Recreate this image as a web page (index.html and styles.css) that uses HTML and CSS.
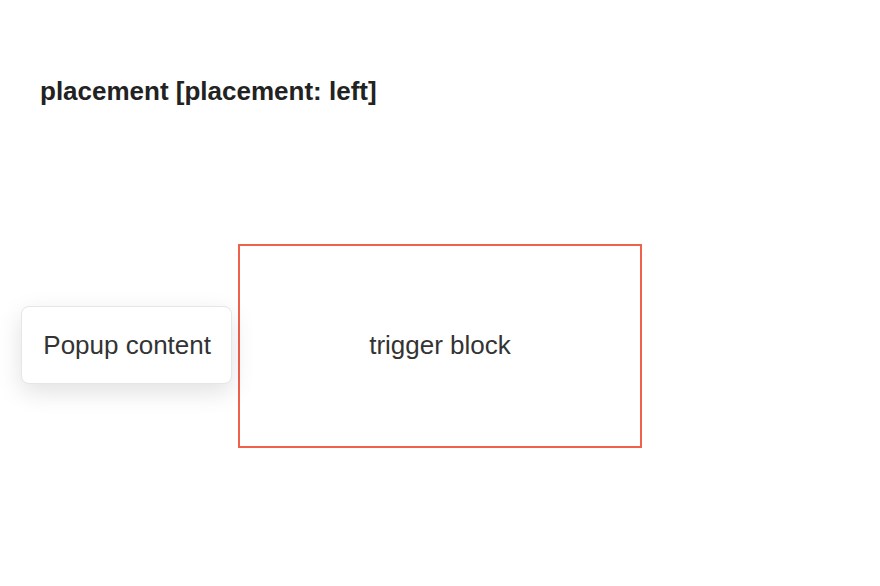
FILE: index.html
```html
<!DOCTYPE html>
<html>
<head>
<meta charset="utf-8">
<link rel="stylesheet" href="styles.css">
</head>
<body>
<div class="page">
  <h2 class="title">placement [placement: left]</h2>
  <div class="stage">
    <div class="trigger">
      <span class="label">trigger block</span>
      <div class="popup">Popup content</div>
    </div>
  </div>
</div>
</body>
</html>
```
FILE: styles.css
```css
html, body {
  margin: 0;
  padding: 0;
  background: #ffffff;
}
body {
  font-family: "Liberation Sans", Arial, sans-serif;
  color: #333333;
}
.page {
  width: 880px;
  height: 586px;
  box-sizing: border-box;
  padding-top: 76px;
}
.title {
  margin: 0 0 0 40px;
  font-size: 26px;
  line-height: 30px;
  font-weight: bold;
  color: #222222;
}
.stage {
  margin-top: 138px;
  display: flex;
  justify-content: center;
}
.trigger {
  position: relative;
  width: 400px;
  height: 200px;
  border: 2px solid #f0614d;
  display: flex;
  align-items: center;
  justify-content: center;
  font-size: 26px;
  color: #333333;
}
.label {
  margin-top: -2px;
}
.popup {
  position: absolute;
  right: calc(100% + 8px);
  top: 50%;
  margin-top: -1px;
  transform: translateY(-50%);
  white-space: nowrap;
  padding: 23px 20px 23px 21px;
  line-height: 30px;
  font-size: 26px;
  background: #ffffff;
  border: 1px solid #e6e6e6;
  border-radius: 8px;
  box-shadow: 0 8px 24px rgba(0, 0, 0, 0.12);
  color: #333333;
}
```
